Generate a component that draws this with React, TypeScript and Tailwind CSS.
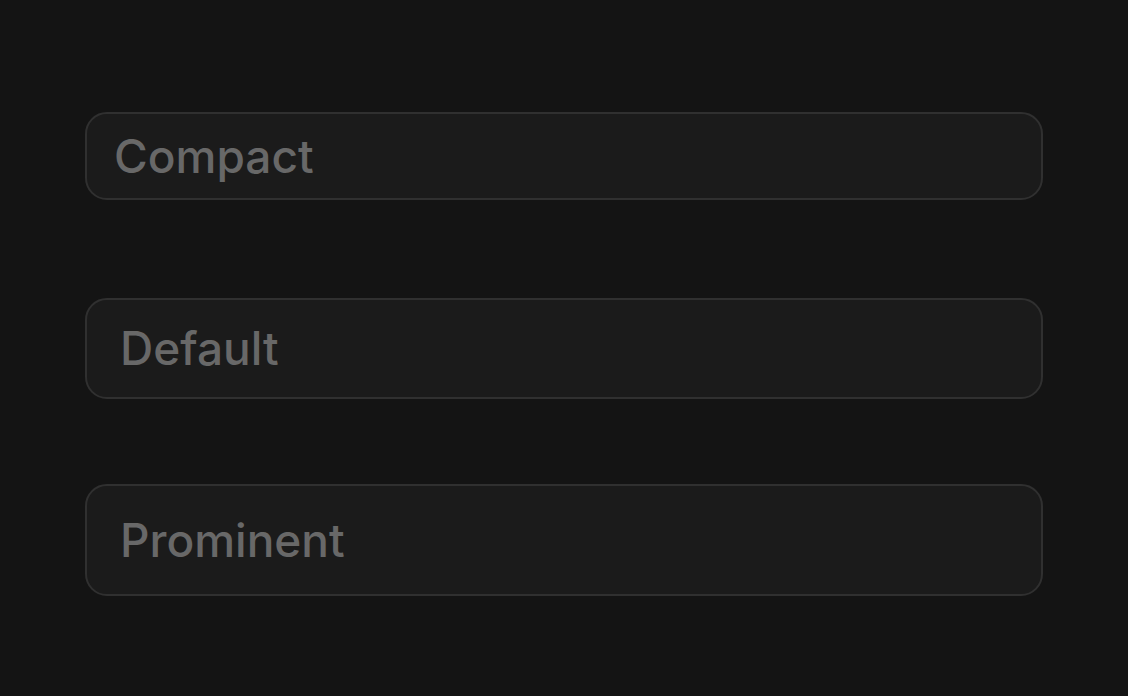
const fields = [
  { label: "Compact", box: "h-[88px] pl-[27px]" },
  { label: "Default", box: "h-[101px] pl-[33px]" },
  { label: "Prominent", box: "h-[112px] pl-[33px]" },
];

const App = () => {
  return (
    <main className="min-h-[696px] bg-[#141414] px-[85px] py-[60px] font-['Inter',sans-serif]">
      {fields.map((f) => (
        <div key={f.label} className="flex h-[192px] items-center">
          <input
            type="text"
            placeholder={f.label}
            className={`w-full rounded-[22px] border-2 border-[#303030] bg-[#1b1b1b] pr-6 text-[46px] font-medium text-[#d4d4d4] outline-none placeholder:text-[#686868] ${f.box}`}
          />
        </div>
      ))}
    </main>
  );
};

export default App;
